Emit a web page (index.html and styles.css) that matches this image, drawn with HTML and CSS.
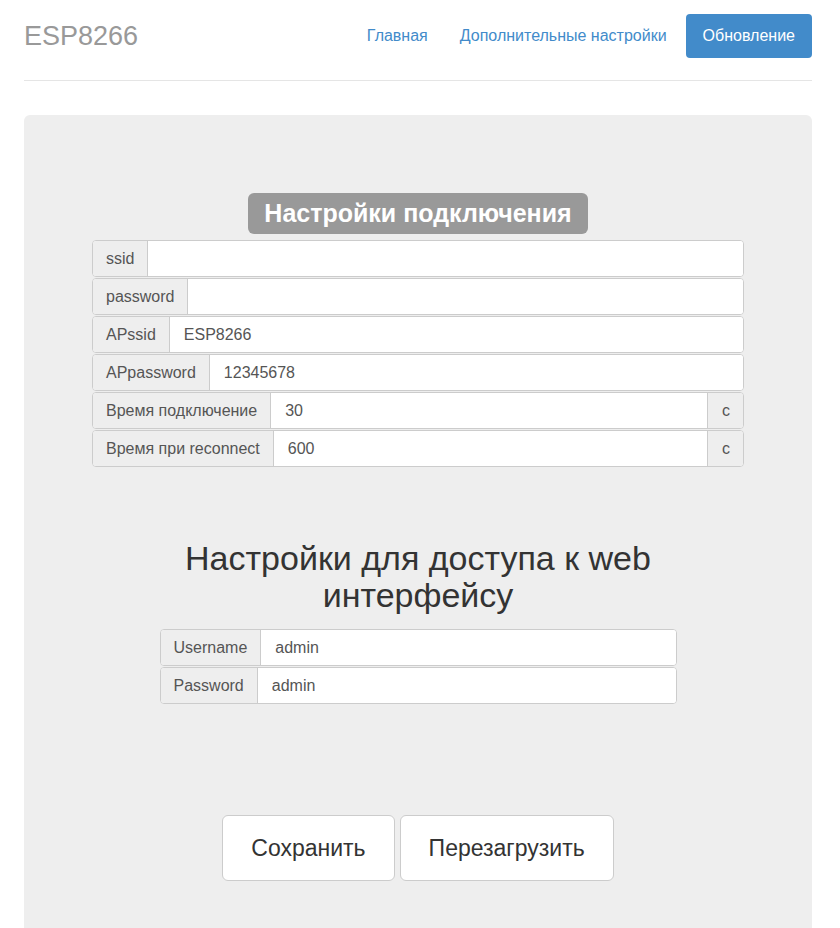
FILE: index.html
```html
<!DOCTYPE html>
<html lang="ru">
<head>
<meta charset="utf-8">
<title>ESP8266</title>
<link rel="stylesheet" href="styles.css">
</head>
<body>
<div class="container">
  <header class="header">
    <div class="brand">ESP8266</div>
    <nav class="nav">
      <a class="nav-link nav-first" href="#">Главная</a>
      <a class="nav-link" href="#">Дополнительные настройки</a>
      <a class="nav-link active" href="#">Обновление</a>
    </nav>
  </header>

  <main class="jumbotron">
    <section class="block block-wide">
      <div class="title-row"><span class="title-label">Настройки подключения</span></div>
      <div class="group"><span class="addon">ssid</span><input class="field" type="text" value=""></div>
      <div class="group"><span class="addon">password</span><input class="field" type="text" value=""></div>
      <div class="group"><span class="addon">APssid</span><input class="field" type="text" value="ESP8266"></div>
      <div class="group"><span class="addon">APpassword</span><input class="field" type="text" value="12345678"></div>
      <div class="group"><span class="addon">Время подключение</span><input class="field" type="text" value="30"><span class="addon addon-right">с</span></div>
      <div class="group"><span class="addon">Время при reconnect</span><input class="field" type="text" value="600"><span class="addon addon-right">с</span></div>
    </section>

    <section class="block block-narrow">
      <h1 class="heading">Настройки для доступа к web интерфейсу</h1>
      <div class="group"><span class="addon">Username</span><input class="field" type="text" value="admin"></div>
      <div class="group"><span class="addon">Password</span><input class="field" type="text" value="admin"></div>
    </section>

    <div class="actions">
      <button class="btn" type="button">Сохранить</button>
      <button class="btn" type="button">Перезагрузить</button>
    </div>
  </main>
</div>
</body>
</html>
```

FILE: styles.css
```css
* { box-sizing: border-box; }

html, body {
  margin: 0;
  padding: 0;
  background: #fff;
  font-family: "Liberation Sans", Arial, sans-serif;
  font-size: 16px;
  line-height: 1.5;
  color: #333;
}

.container {
  padding: 0 28px 0 24px;
}

.header {
  display: flex;
  align-items: center;
  justify-content: space-between;
  padding: 14px 0 22px;
  border-bottom: 1px solid #e5e5e5;
}

.brand {
  font-size: 27px;
  line-height: 44px;
  color: #999;
}

.nav {
  display: flex;
  gap: 2px;
}

.nav-link {
  display: block;
  padding: 10px 17px;
  font-size: 16px;
  line-height: 24px;
  color: #428bca;
  text-decoration: none;
  border-radius: 4px;
}

.nav-first {
  margin-right: -4px;
}

.nav-link.active {
  background: #428bca;
  color: #fff;
}

.jumbotron {
  margin-top: 34px;
  background: #eee;
  border-radius: 6px;
  padding: 78px 0 60px;
  min-height: 900px;
}

.block {
  margin: 0 auto;
}

.block-wide { width: 652px; }

.block-narrow {
  width: 517px;
  margin-top: 73px;
}

.title-row {
  text-align: center;
  margin-bottom: 6px;
}

.title-label {
  display: inline-block;
  background: #999;
  color: #fff;
  font-weight: bold;
  font-size: 25px;
  line-height: 41px;
  height: 41px;
  padding: 0 16px;
  border-radius: 6px;
}

.group {
  display: flex;
  height: 37px;
  margin-bottom: 1px;
  border: 1px solid #ccc;
  border-radius: 4px;
  overflow: hidden;
  background: #fff;
}

.addon {
  flex: none;
  display: flex;
  align-items: center;
  padding: 0 13px;
  background: #eee;
  border-right: 1px solid #ccc;
  color: #555;
  font-size: 16px;
  white-space: nowrap;
}

.addon-right {
  border-right: none;
  border-left: 1px solid #ccc;
  padding: 0 13px 0 14px;
}

.field {
  flex: 1;
  min-width: 0;
  border: none;
  outline: none;
  margin: 0;
  padding: 0 14px;
  background: #fff;
  font-family: "Liberation Sans", Arial, sans-serif;
  font-size: 16px;
  color: #555;
}

.heading {
  margin: 0 0 15px;
  text-align: center;
  font-size: 34px;
  font-weight: normal;
  line-height: 37px;
  color: #333;
}

.actions {
  display: flex;
  justify-content: center;
  gap: 5px;
  margin-top: 111px;
}

.btn {
  background: #fff;
  border: 1px solid #ccc;
  border-radius: 6px;
  padding: 0 28px;
  height: 66px;
  font-family: "Liberation Sans", Arial, sans-serif;
  font-size: 23px;
  line-height: 1.33;
  color: #333;
  cursor: pointer;
}
```
